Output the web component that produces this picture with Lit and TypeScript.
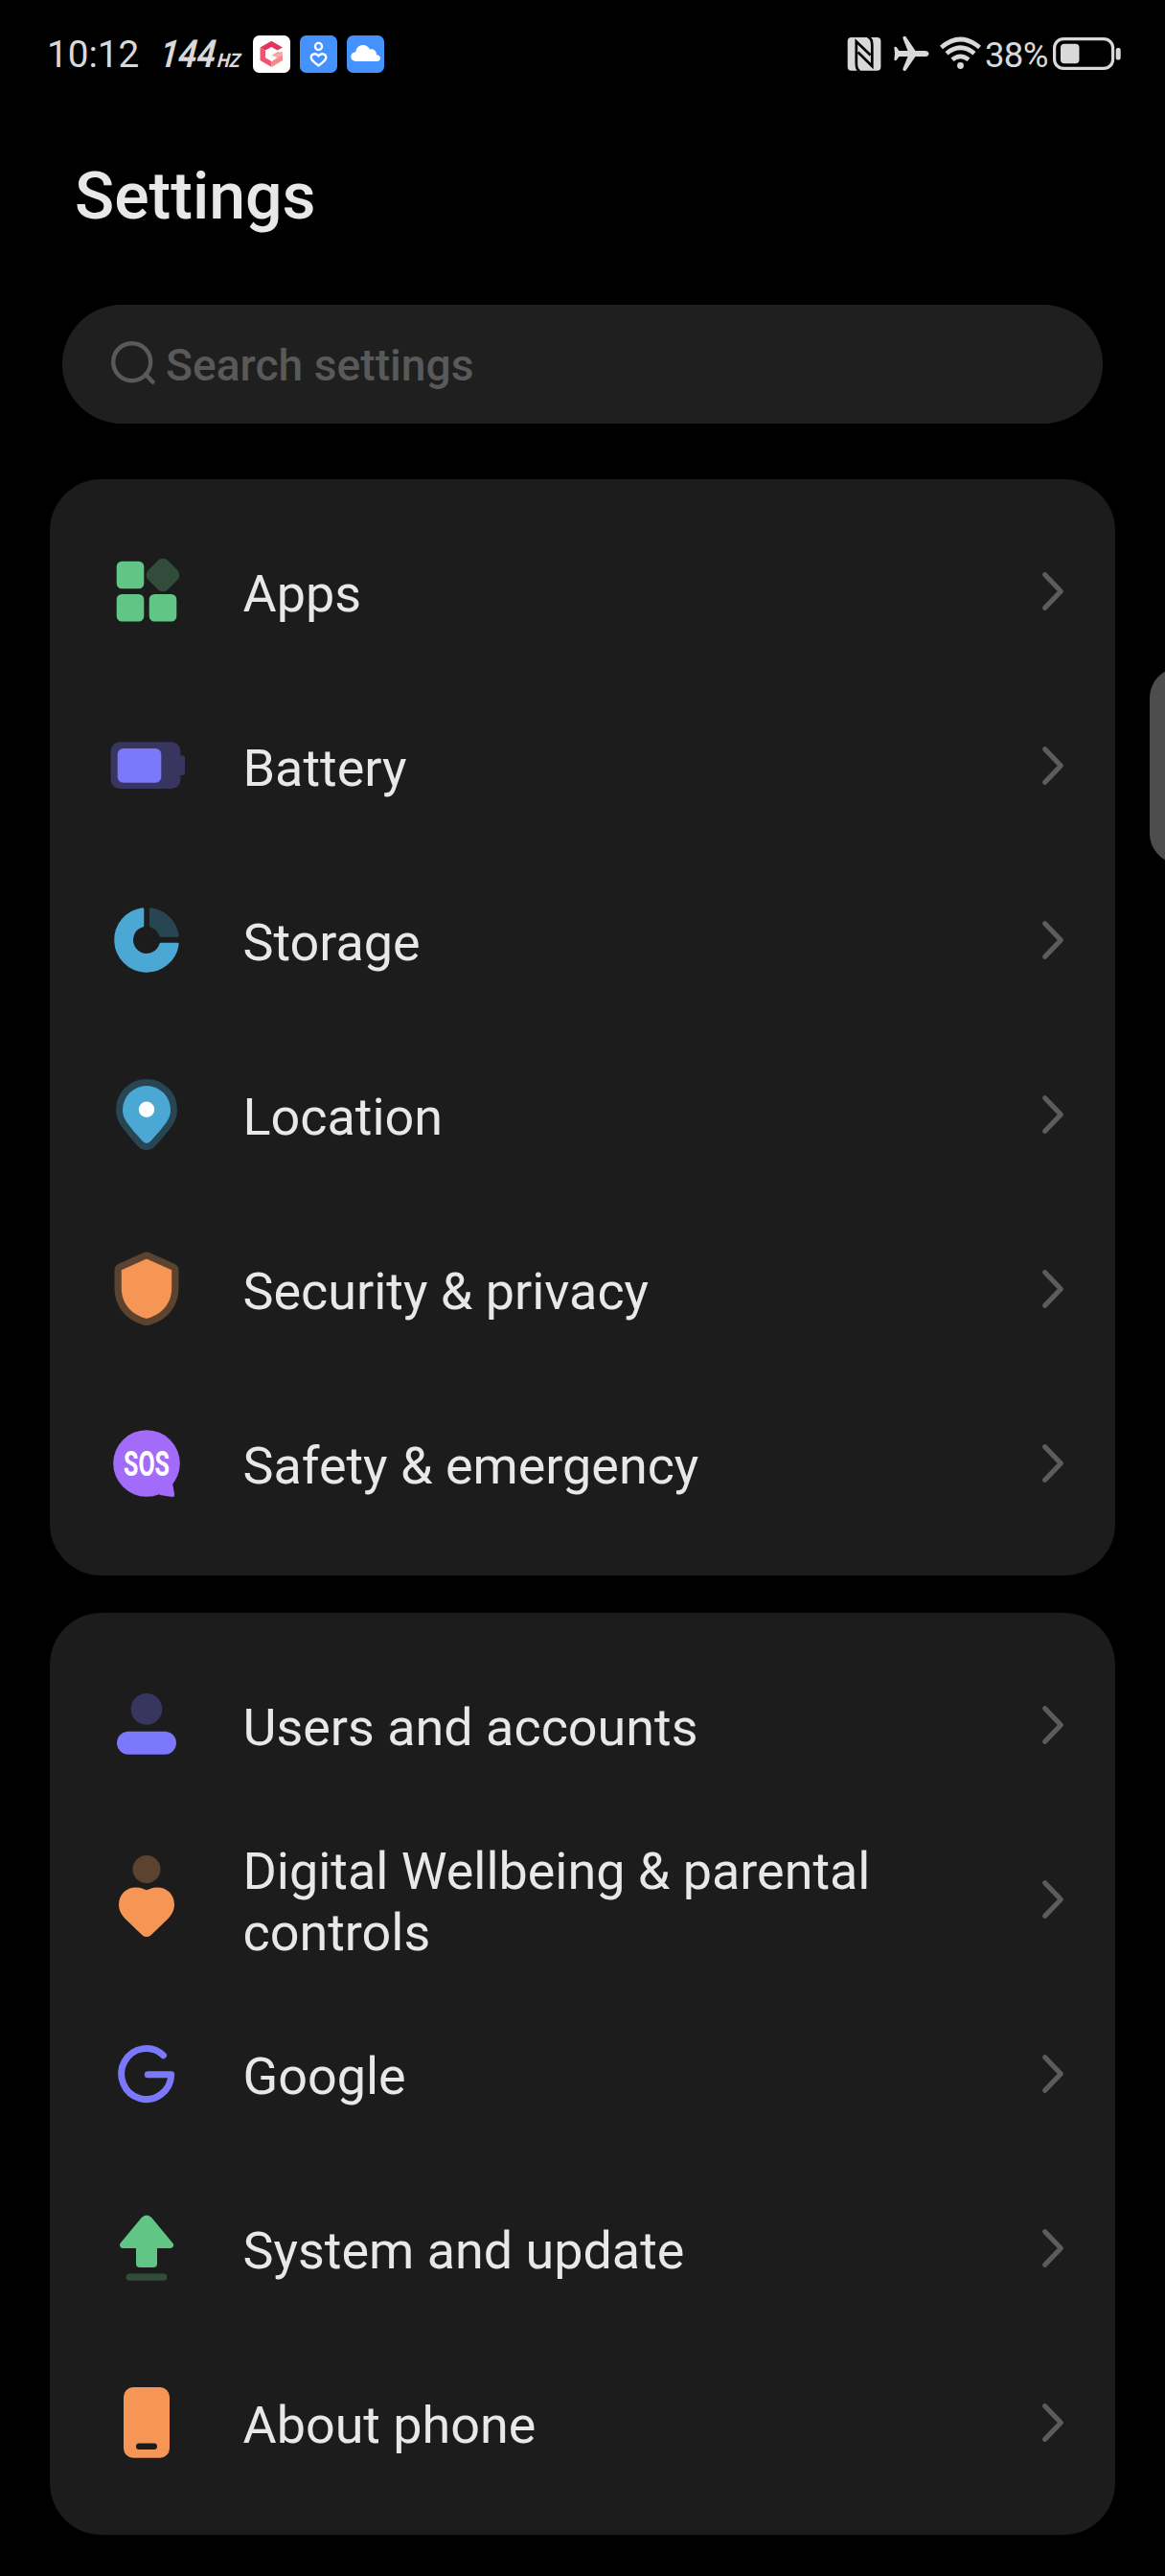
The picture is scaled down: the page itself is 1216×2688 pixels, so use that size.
import { LitElement, html, svg, css, type TemplateResult, type SVGTemplateResult } from "lit";
import { customElement, property } from "lit/decorators.js";

const GREEN = "#61c685";
const GREEN_DIM = "#314c3a";
const VIOLET = "#7b78fb";
const VIOLET_DIM = "#38365f";
const BLUE = "#4ba7d3";
const BLUE_DIM = "#284552";
const ORANGE = "#f69656";
const ORANGE_DIM = "#5c4330";
const CARD = "#1c1c1c";

const PIN =
  "M40 10A25 25 0 0 1 65 35C65 44 60.500 49.500 44.500 67.600Q40 72.400 35.500 67.600C19.500 49.500 15 44 15 35A25 25 0 0 1 40 10Z";
const SHIELD =
  "M39 9.100Q40 8.600 41 9.100L66.200 20.300V39C66.200 55 56.500 66 41.500 70.600Q40 71 38.500 70.600C23.500 66 13.800 55 13.800 39V20.300Z";

// Every row icon is drawn on an 80-unit grid centred in its row.
const ICONS: Record<string, SVGTemplateResult> = {
  apps: svg`
    <g fill=${GREEN}>
      <rect x="8.700" y="8.700" width="28.600" height="28.600" rx="5.500" />
      <rect x="8.700" y="43" width="28.600" height="28.600" rx="5.500" />
      <rect x="42.700" y="43" width="28.600" height="28.600" rx="5.500" />
    </g>
    <rect x="42.700" y="8.700" width="28.600" height="28.600" rx="7" fill=${GREEN_DIM} transform="rotate(45 57 23)" />`,
  battery: svg`
    <rect x="2.600" y="15.300" width="72.800" height="48.700" rx="9.500" fill=${VIOLET_DIM} />
    <path d="M75 29.300h2a3 3 0 0 1 3 3v14.700a3 3 0 0 1-3 3h-2z" fill=${VIOLET_DIM} />
    <rect x="9.700" y="22.100" width="45.600" height="35.600" rx="6" fill=${VIOLET} />`,
  storage: svg`
    <path d="M35.800 7.700A32.400 32.400 0 1 0 72.200 44.200H54.900A15.500 15.500 0 1 1 35.800 24.900Z"
      fill=${BLUE} stroke=${BLUE} stroke-width="3" stroke-linejoin="round" />
    <path d="M44.500 7.700A32.400 32.400 0 0 1 72.200 35.200H54.800A15.500 15.500 0 0 0 44.500 25Z"
      fill=${BLUE_DIM} stroke=${BLUE_DIM} stroke-width="3" stroke-linejoin="round" />`,
  location: svg`
    <path d=${PIN} fill=${BLUE_DIM} stroke=${BLUE_DIM} stroke-width="14" stroke-linejoin="round" />
    <path d=${PIN} fill=${BLUE} />
    <circle cx="40" cy="34.700" r="8.200" fill="#fff" />`,
  security: svg`
    <path d=${SHIELD} fill=${ORANGE_DIM} stroke=${ORANGE_DIM} stroke-width="14.600" stroke-linejoin="round" />
    <path d=${SHIELD} fill=${ORANGE} />`,
  sos: svg`
    <circle cx="40" cy="40" r="34.800" fill="#a26bfa" />
    <path d="M69 58Q66.800 61 67.400 63L69.200 72.500Q69.200 75.300 66.500 75L54 73L45 60Z" fill="#a26bfa" />
    <text class="sos" x="16" y="52.600" textLength="48" lengthAdjust="spacingAndGlyphs">SOS</text>`,
  users: svg`
    <circle cx="40" cy="23.400" r="16.300" fill=${VIOLET_DIM} />
    <rect x="9" y="46.800" width="62" height="24" rx="12" fill=${VIOLET} />`,
  wellbeing: svg`
    <circle cx="40" cy="8.400" r="14.500" fill=${ORANGE_DIM} />
    <path d="M40 30.300C43 29.300 46 27.400 51 27.400C61.500 27.400 69 35 69 45.500C69 52 65.500 57 61.500 61L44.600 77.200Q40 81 35.400 77.200L18.500 61C14.500 57 11 52 11 45.500C11 35 18.500 27.400 29 27.400C34 27.400 37 29.300 40 30.300Z" fill=${ORANGE} />`,
  google: svg`
    <path d="M57.500 20.700A26 26.500 0 1 0 65.700 40.800H41.300" fill="none" stroke=${VIOLET}
      stroke-width="7" stroke-linecap="round" stroke-linejoin="round" />`,
  update: svg`
    <path d="M37.600 10Q40 8 42.400 10L64.600 36.600H15.400Z" fill=${GREEN} stroke=${GREEN} stroke-width="6.800" stroke-linejoin="round" />
    <rect x="29" y="34" width="22" height="26" rx="4" fill=${GREEN} />
    <rect x="18.600" y="66.500" width="42.800" height="7.300" rx="3.600" fill=${GREEN_DIM} />`,
  phone: svg`
    <rect x="16" y="3.100" width="48" height="73.600" rx="10" fill=${ORANGE} />
    <rect x="29" y="61.600" width="22" height="6.400" rx="3.200" fill=${CARD} />`,
};

interface Item {
  icon: string;
  label: string;
}

const GROUPS: Item[][] = [
  [
    { icon: "apps", label: "Apps" },
    { icon: "battery", label: "Battery" },
    { icon: "storage", label: "Storage" },
    { icon: "location", label: "Location" },
    { icon: "security", label: "Security & privacy" },
    { icon: "sos", label: "Safety & emergency" },
  ],
  [
    { icon: "users", label: "Users and accounts" },
    { icon: "wellbeing", label: "Digital Wellbeing & parental controls" },
    { icon: "google", label: "Google" },
    { icon: "update", label: "System and update" },
    { icon: "phone", label: "About phone" },
  ],
];

@customElement("status-bar")
export class StatusBar extends LitElement {
  static styles = css`
    :host {
      display: flex;
      justify-content: space-between;
      height: 114px;
      box-sizing: border-box;
      padding: 0 45px 0 49px;
      color: #d9d9d9;
    }
    .side {
      display: flex;
      align-items: center;
      height: 112px;
    }
    .clock {
      width: 119px;
      font-size: 38.700px;
      white-space: nowrap;
    }
    .percent {
      width: 72px;
      font-size: 36.500px;
      letter-spacing: -0.700px;
      line-height: 44px;
      padding: 3px 0 0 2px;
      box-sizing: border-box;
      white-space: nowrap;
    }
    .rate {
      font-family: "Roboto", "Liberation Sans", sans-serif;
      font-style: italic;
      font-weight: 600;
      fill: #d9d9d9;
    }
    .unit {
      font-weight: 700;
    }
    svg {
      display: block;
      flex: none;
      overflow: visible;
    }
    .app {
      margin-right: 10px;
    }
    .hz {
      margin-right: 10px;
    }
  `;

  render(): TemplateResult {
    return html`
      <div class="side">
        <span class="clock">10:12</span>
        <svg class="hz" width="86" height="60" viewBox="0 0 86 60">
          <g transform="translate(4.600 0) skewX(-6)">
            <text class="rate" x="-2" y="44" font-size="40" textLength="58" lengthAdjust="spacingAndGlyphs">144</text>
            <text class="rate unit" x="58.500" y="44" font-size="20" textLength="24" lengthAdjust="spacingAndGlyphs">HZ</text>
          </g>
        </svg>
        <svg class="app" width="39" height="39" viewBox="0 0 39 39">
          <rect width="39" height="39" rx="6.500" fill="#fff" />
          <path d="M7.500 12.500L19.300 5.700L31 12.500L25.500 15.500L19.300 12L13 15.600Z" fill="#e5355e" />
          <path d="M7.500 12.500L13 15.600V23.300L19.500 27V33L7.500 26Z" fill="#f0576f" />
          <path d="M31 17.500V26L19.500 33V27L25.500 23.300L20 20.500L25.500 17.500Z" fill="#f48a8c" />
          <path d="M20 20.500L31 17.500V21L25.500 23.300Z" fill="#f7aaa6" />
        </svg>
        <svg class="app" width="39" height="39" viewBox="0 0 39 39">
          <rect width="39" height="39" rx="6.500" fill="#4492fe" />
          <g fill="none" stroke="#fff" stroke-width="2.300" stroke-linejoin="round">
            <circle cx="19.500" cy="11.500" r="3.600" />
            <path d="M19.500 21.500C17.500 18 11.700 18.700 11.700 23C11.700 25.500 13.500 26.800 19.500 31.500C25.500 26.800 27.300 25.500 27.300 23C27.300 18.700 21.500 18 19.500 21.500Z" />
          </g>
        </svg>
        <svg width="39" height="39" viewBox="0 0 39 39">
          <rect width="39" height="39" rx="6.500" fill="#4492fe" />
          <path d="M9.500 27C2.500 27 2.500 17.500 9.300 17.300C10 8.500 21 7.500 24 14.500C28 13.500 31.300 16.500 31 20.300C36.500 20.500 36 27 31.500 27Z" fill="#fff" />
        </svg>
      </div>
      <div class="side">
        <svg width="48" height="38" viewBox="0 0 48 38">
          <rect x="0.700" y="2" width="34.700" height="34.700" rx="4" fill="#d9d9d9" />
          <g fill="none" stroke="#000" stroke-width="2.700">
            <path d="M13.500 37.400Q9.800 36 9.800 29V6.300L24.600 20.500" />
            <path d="M21.600 1.300Q26.300 3 26.300 10V32L11.500 17.500" />
          </g>
        </svg>
        <svg width="48" height="38" viewBox="0 0 48 38">
          <path d="M1.300 12.300Q3.300 11 4.300 13L6.500 16H15.500L10.200 2.500Q11 0 13.500 1.300L23.500 16H34Q37.500 16.500 37.500 19T34 22H23.500L13.500 36.500Q11 38 10.200 35.300L15.500 22H6.500L4.300 25Q3.300 27 1.300 25.500L2 19Z" fill="#d9d9d9" />
        </svg>
        <svg width="46" height="38" viewBox="0 0 46 38">
          <g fill="none" stroke="#d9d9d9" stroke-width="4.600">
            <path d="M2.500 12.500Q22.500-4.500 42.500 12.500" />
            <path d="M8 18.700Q22.500 6.800 37 18.700" />
            <path d="M14 25.200Q22.500 18.400 31 25.200" />
          </g>
          <circle cx="22.500" cy="31.500" r="3.400" fill="#d9d9d9" />
        </svg>
        <span class="percent">38%</span>
        <svg width="73" height="38" viewBox="0 0 73 38">
          <rect x="2.600" y="3.600" width="61" height="30.800" rx="9.500" fill="none" stroke="#d9d9d9" stroke-width="3.200" />
          <rect x="9" y="8.800" width="19.500" height="20.500" rx="4" fill="#d9d9d9" />
          <rect x="66.700" y="13" width="5" height="12.500" rx="2" fill="#d9d9d9" />
        </svg>
      </div>
    `;
  }
}

@customElement("settings-row")
export class SettingsRow extends LitElement {
  @property() icon = "";
  @property() label = "";

  static styles = css`
    :host {
      display: flex;
      align-items: center;
      height: 182px;
      box-sizing: border-box;
      padding: 0 51px 0 53px;
    }
    svg {
      display: block;
      flex: none;
    }
    .label {
      flex: 1;
      margin-left: 52.500px;
      padding: 5.500px 140px 0 0;
      font-size: 53.900px;
      line-height: 63.300px;
      color: #e8e8e8;
    }
    .sos {
      font-family: "Roboto", "Liberation Sans", sans-serif;
      font-weight: 700;
      font-size: 36.500px;
      fill: #fff;
    }
  `;

  render(): TemplateResult {
    return html`
      <svg width="96" height="96" viewBox="-8 -8 96 96">${ICONS[this.icon]}</svg>
      <span class="label">${this.label}</span>
      <svg width="26" height="44" viewBox="0 0 26 44">
        <path d="M3.700 4.700L20.300 22L3.700 39.300" fill="none" stroke="#5c5c5c" stroke-width="5.200"
          stroke-linecap="round" stroke-linejoin="round" />
      </svg>
    `;
  }
}

@customElement("app-root")
export class AppRoot extends LitElement {
  static styles = css`
    :host {
      display: block;
      position: relative;
      width: 1216px;
      height: 2688px;
      overflow: hidden;
      background: #000;
      font-family: "Roboto", "Liberation Sans", sans-serif;
    }
    .title {
      margin: 0;
      padding: 51px 0 0 78px;
      height: 204px;
      box-sizing: border-box;
      font-size: 68px;
      line-height: 80px;
      font-weight: 500;
      color: #e8e8e8;
    }
    .search {
      display: flex;
      align-items: center;
      gap: 8px;
      height: 124px;
      margin: 0 65px 58px;
      padding-left: 48px;
      box-sizing: border-box;
      border-radius: 62px;
      background: #1f1f1f;
    }
    .placeholder {
      padding-top: 2px;
      font-size: 46.200px;
      line-height: 54px;
      font-weight: 500;
      color: #595959;
    }
    .card {
      margin: 0 52px 39px;
      padding: 26px 0;
      border-radius: 54px;
      background: #1c1c1c;
    }
    .edge-handle {
      position: absolute;
      top: 697px;
      right: -34px;
      width: 50px;
      height: 204px;
      border-radius: 31px 0 0 31px;
      background: #4d4d4d;
    }
  `;

  render(): TemplateResult {
    return html`
      <status-bar></status-bar>
      <h1 class="title">Settings</h1>
      <div class="search">
        <svg width="52" height="52" viewBox="0 0 52 52">
          <g fill="none" stroke="#595959" stroke-width="4.400" stroke-linecap="round">
            <circle cx="24.700" cy="23.700" r="19.500" />
            <path d="M39 36.700L46.500 44.700" />
          </g>
        </svg>
        <span class="placeholder">Search settings</span>
      </div>
      ${GROUPS.map(
        (group) => html`
          <div class="card">
            ${group.map((item) => html`<settings-row .icon=${item.icon} .label=${item.label}></settings-row>`)}
          </div>
        `,
      )}
      <div class="edge-handle"></div>
    `;
  }
}
